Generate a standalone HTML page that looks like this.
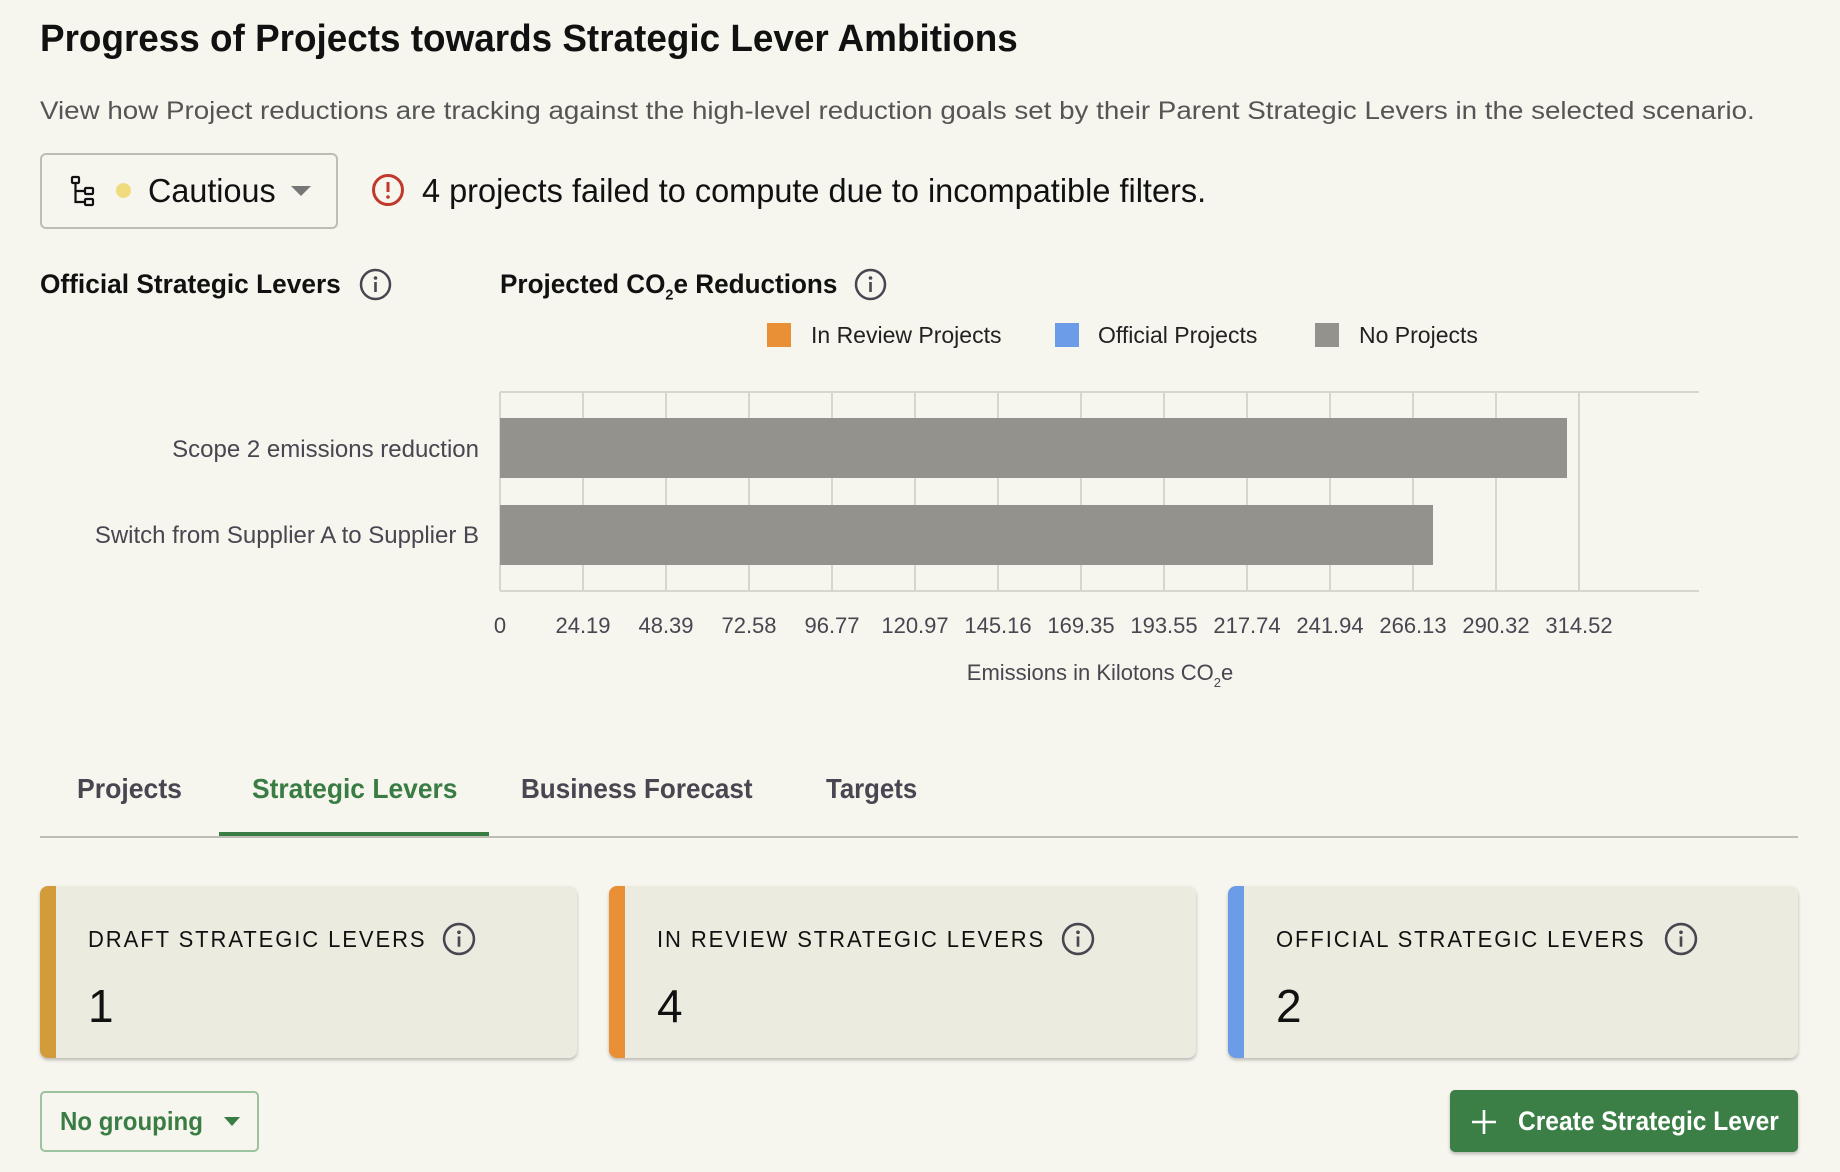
<!DOCTYPE html>
<html><head><meta charset="utf-8"><style>
*{margin:0;padding:0;box-sizing:border-box}
body{width:1840px;height:1172px;background:#f6f5ee;font-family:"Liberation Sans",sans-serif;color:#111;position:relative;overflow:hidden}
.t{position:absolute;white-space:nowrap;transform-origin:left center}
.info{position:absolute}
.card{position:absolute;top:886px;height:172px;background:#ecebe0;border-radius:8px;overflow:hidden;box-shadow:0 2px 3px rgba(0,0,0,.25)}
.card .bar{position:absolute;left:0;top:0;bottom:0;width:16px}
.card .lbl{position:absolute;left:48px;top:40px;font-size:23px;letter-spacing:2px;white-space:nowrap;transform:scaleX(.957);transform-origin:left center}
.card .num{position:absolute;left:48px;top:97px;font-size:46px;line-height:1}
</style></head><body>

<div class="t" style="left:40px;top:18px;font-size:38px;line-height:42px;font-weight:bold;transform:scaleX(.97)">Progress of Projects towards Strategic Lever Ambitions</div>
<div class="t" style="left:40px;top:96px;font-size:25px;line-height:30px;color:#555;transform:scaleX(1.11)">View how Project reductions are tracking against the high-level reduction goals set by their Parent Strategic Levers in the selected scenario.</div>

<div style="position:absolute;left:40px;top:153px;width:298px;height:76px;border:2px solid #bdbcb5;border-radius:6px"></div>
<svg style="position:absolute;left:70px;top:175px" width="28" height="32" viewBox="0 0 28 32"><g fill="none" stroke="#111" stroke-width="2.2"><rect x="2" y="2" width="7" height="6" rx="1"/><rect x="15" y="13" width="8" height="6" rx="1"/><rect x="15" y="24" width="8" height="6" rx="1"/><path d="M5.5 8v19h9.5M5.5 16h9.5"/></g></svg>
<div style="position:absolute;left:116px;top:183px;width:15px;height:15px;border-radius:50%;background:#f0dc7c"></div>
<div class="t" style="left:148px;top:172px;font-size:33px;line-height:38px;transform:scaleX(.98)">Cautious</div>
<div style="position:absolute;left:291px;top:186px;width:0;height:0;border-left:10px solid transparent;border-right:10px solid transparent;border-top:10px solid #777"></div>

<svg style="position:absolute;left:371px;top:173px" width="34" height="34" viewBox="0 0 34 34"><circle cx="17" cy="17" r="14.5" fill="none" stroke="#c0392b" stroke-width="3"/><path d="M17 9v10" stroke="#c0392b" stroke-width="3"/><circle cx="17" cy="24" r="1.8" fill="#c0392b"/></svg>
<div class="t" style="left:422px;top:172px;font-size:33px;line-height:38px;transform:scaleX(.985)">4 projects failed to compute due to incompatible filters.</div>

<div class="t" style="left:40px;top:268px;font-size:27px;line-height:32px;font-weight:bold;transform:scaleX(.973)">Official Strategic Levers</div>
<svg class="info" style="left:359px;top:268px" width="33" height="33" viewBox="0 0 33 33"><circle cx="16.5" cy="16.5" r="14.5" fill="none" stroke="#4a4550" stroke-width="2.5"/><circle cx="16.5" cy="10" r="1.8" fill="#4a4550"/><path d="M16.5 14v10" stroke="#4a4550" stroke-width="2.6"/></svg>
<div class="t" style="left:500px;top:268px;font-size:27px;line-height:32px;font-weight:bold;transform:scaleX(.967)">Projected CO<sub style="font-size:15px">2</sub>e Reductions</div>
<svg class="info" style="left:854px;top:268px" width="33" height="33" viewBox="0 0 33 33"><circle cx="16.5" cy="16.5" r="14.5" fill="none" stroke="#4a4550" stroke-width="2.5"/><circle cx="16.5" cy="10" r="1.8" fill="#4a4550"/><path d="M16.5 14v10" stroke="#4a4550" stroke-width="2.6"/></svg>

<div style="position:absolute;left:767px;top:323px;width:24px;height:24px;background:#e98f35"></div>
<div class="t" style="left:811px;top:321px;font-size:23px;line-height:28px;color:#222">In Review Projects</div>
<div style="position:absolute;left:1055px;top:323px;width:24px;height:24px;background:#6c9ce8"></div>
<div class="t" style="left:1098px;top:321px;font-size:23px;line-height:28px;color:#222">Official Projects</div>
<div style="position:absolute;left:1315px;top:323px;width:24px;height:24px;background:#94928c"></div>
<div class="t" style="left:1359px;top:321px;font-size:23px;line-height:28px;color:#222">No Projects</div>

<svg style="position:absolute;left:0;top:0" width="1840" height="720">
<g stroke="#d6d5ce" stroke-width="2">
<line x1="500" y1="392" x2="1699" y2="392"/><line x1="500" y1="591" x2="1699" y2="591"/>
<line x1="500" y1="392" x2="500" y2="591"/>
<line x1="583" y1="392" x2="583" y2="591"/><line x1="666" y1="392" x2="666" y2="591"/><line x1="749" y1="392" x2="749" y2="591"/><line x1="832" y1="392" x2="832" y2="591"/><line x1="915" y1="392" x2="915" y2="591"/><line x1="998" y1="392" x2="998" y2="591"/><line x1="1081" y1="392" x2="1081" y2="591"/><line x1="1164" y1="392" x2="1164" y2="591"/><line x1="1247" y1="392" x2="1247" y2="591"/><line x1="1330" y1="392" x2="1330" y2="591"/><line x1="1413" y1="392" x2="1413" y2="591"/><line x1="1496" y1="392" x2="1496" y2="591"/><line x1="1579" y1="392" x2="1579" y2="591"/>
</g>
<rect x="500" y="418" width="1067" height="60" fill="#94928c"/>
<rect x="500" y="505" width="933" height="60" fill="#94928c"/>
<g font-family="Liberation Sans, sans-serif" font-size="24" fill="#4a4550" text-anchor="end">
<text x="479" y="457">Scope 2 emissions reduction</text>
<text x="479" y="543">Switch from Supplier A to Supplier B</text>
</g>
<g font-family="Liberation Sans, sans-serif" font-size="22" fill="#4a4550" text-anchor="middle">
<text x="500" y="633">0</text><text x="583" y="633">24.19</text><text x="666" y="633">48.39</text><text x="749" y="633">72.58</text><text x="832" y="633">96.77</text><text x="915" y="633">120.97</text><text x="998" y="633">145.16</text><text x="1081" y="633">169.35</text><text x="1164" y="633">193.55</text><text x="1247" y="633">217.74</text><text x="1330" y="633">241.94</text><text x="1413" y="633">266.13</text><text x="1496" y="633">290.32</text><text x="1579" y="633">314.52</text>
<text x="1100" y="680">Emissions in Kilotons CO<tspan font-size="13" dy="7">2</tspan><tspan dy="-7">e</tspan></text>
</g>
</svg>

<div class="t" style="left:77px;top:772px;font-size:28px;line-height:34px;font-weight:bold;color:#4a4550;transform:scaleX(.95)">Projects</div>
<div class="t" style="left:252px;top:772px;font-size:28px;line-height:34px;font-weight:bold;color:#3a7d44;transform:scaleX(.943)">Strategic Levers</div>
<div class="t" style="left:521px;top:772px;font-size:28px;line-height:34px;font-weight:bold;color:#4a4550;transform:scaleX(.93)">Business Forecast</div>
<div class="t" style="left:826px;top:772px;font-size:28px;line-height:34px;font-weight:bold;color:#4a4550;transform:scaleX(.92)">Targets</div>
<div style="position:absolute;left:40px;top:836px;width:1758px;height:2px;background:#bdbcb5"></div>
<div style="position:absolute;left:219px;top:832px;width:270px;height:4px;background:#3a7d44"></div>

<div class="card" style="left:40px;width:537px"><div class="bar" style="background:#d49b3a"></div><div class="lbl">DRAFT STRATEGIC LEVERS</div><div class="num">1</div>
<svg class="info" style="left:402px;top:36px" width="34" height="34" viewBox="0 0 33 33"><circle cx="16.5" cy="16.5" r="14.5" fill="none" stroke="#4a4550" stroke-width="2.5"/><circle cx="16.5" cy="10" r="1.8" fill="#4a4550"/><path d="M16.5 14v10" stroke="#4a4550" stroke-width="2.6"/></svg></div>
<div class="card" style="left:609px;width:587px"><div class="bar" style="background:#e98f35"></div><div class="lbl">IN REVIEW STRATEGIC LEVERS</div><div class="num">4</div>
<svg class="info" style="left:452px;top:36px" width="34" height="34" viewBox="0 0 33 33"><circle cx="16.5" cy="16.5" r="14.5" fill="none" stroke="#4a4550" stroke-width="2.5"/><circle cx="16.5" cy="10" r="1.8" fill="#4a4550"/><path d="M16.5 14v10" stroke="#4a4550" stroke-width="2.6"/></svg></div>
<div class="card" style="left:1228px;width:570px"><div class="bar" style="background:#6c9ce8"></div><div class="lbl">OFFICIAL STRATEGIC LEVERS</div><div class="num">2</div>
<svg class="info" style="left:436px;top:36px" width="34" height="34" viewBox="0 0 33 33"><circle cx="16.5" cy="16.5" r="14.5" fill="none" stroke="#4a4550" stroke-width="2.5"/><circle cx="16.5" cy="10" r="1.8" fill="#4a4550"/><path d="M16.5 14v10" stroke="#4a4550" stroke-width="2.6"/></svg></div>

<div style="position:absolute;left:40px;top:1091px;width:219px;height:61px;border:2px solid #9cc29f;border-radius:5px"></div>
<div class="t" style="left:60px;top:1104px;font-size:26px;line-height:34px;font-weight:bold;color:#3a7d44;transform:scaleX(.925)">No grouping</div>
<div style="position:absolute;left:224px;top:1117px;width:0;height:0;border-left:8px solid transparent;border-right:8px solid transparent;border-top:9px solid #3a7d44"></div>

<div style="position:absolute;left:1450px;top:1090px;width:348px;height:62px;background:#3c7f46;border-radius:5px;box-shadow:0 2px 3px rgba(0,0,0,.25)"></div>
<svg style="position:absolute;left:1471px;top:1109px" width="26" height="26" viewBox="0 0 26 26"><path d="M13 1v24M1 13h24" stroke="#fff" stroke-width="2.6"/></svg>
<div class="t" style="left:1518px;top:1104px;font-size:27px;line-height:34px;font-weight:bold;color:#fff;transform:scaleX(.91)">Create Strategic Lever</div>

</body></html>
